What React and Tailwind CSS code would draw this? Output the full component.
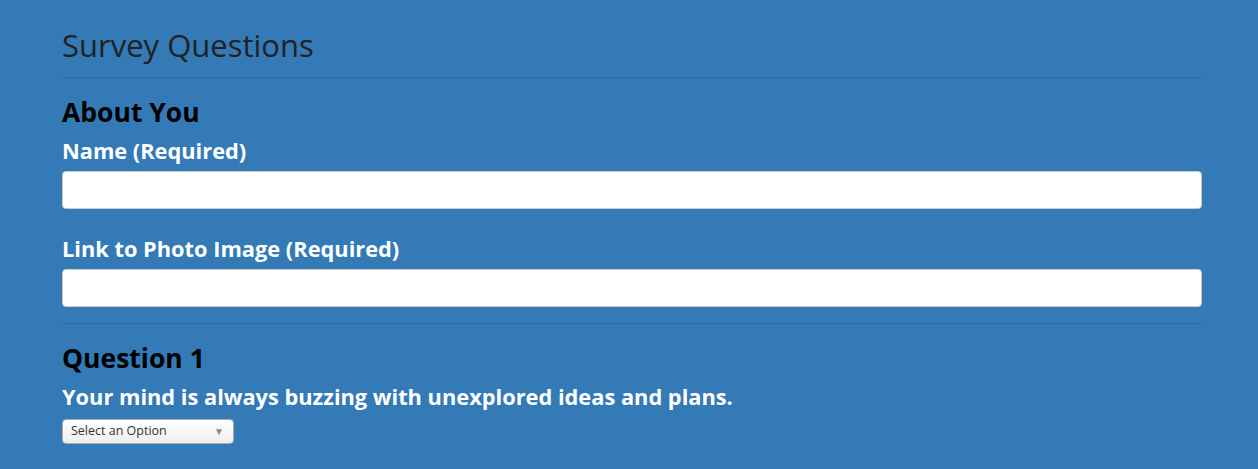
import React from 'react'

export default function App() {
    return (
        <div className="min-h-screen bg-[#337ab7] font-['Open_Sans',sans-serif]">
            <div className="w-[1140px] ml-[62px] pt-[25px]">
                <h1 className="text-[31px] leading-[40px] font-medium text-[#222]">Survey Questions</h1>
                <hr className="mt-[12px] border-t border-[#2e6da4]" />
                <h3 className="mt-[18px] text-[26.5px] leading-[32px] font-bold text-black">About You</h3>
                <label className="block mt-[9px] text-[21.8px] leading-[28px] font-bold text-white">Name (Required)</label>
                <input type="text" className="block mt-[6px] w-full h-[38px] bg-white rounded-[4px] border border-[#ccc]" />
                <label className="block mt-[26px] text-[21.8px] leading-[28px] font-bold text-white">Link to Photo Image (Required)</label>
                <input type="text" className="block mt-[6px] w-full h-[38px] bg-white rounded-[4px] border border-[#ccc]" />
                <hr className="mt-[16px] border-t border-[#2e6da4]" />
                <h3 className="mt-[18px] text-[26.5px] leading-[32px] font-bold text-black">Question 1</h3>
                <p className="mt-[9px] text-[21.8px] leading-[28px] font-bold text-white">Your mind is always buzzing with unexplored ideas and plans.</p>
                <div className="mt-[8px] w-[172px] h-[25px] flex items-center justify-between pl-[8px] pr-[9px] rounded-[4px] border border-[#aaa] bg-gradient-to-b from-white to-[#eee] text-[12.5px] text-[#333]">
                    <span>Select an Option</span>
                    <span className="text-[10px] text-[#888]">▼</span>
                </div>
            </div>
        </div>
    )
}
